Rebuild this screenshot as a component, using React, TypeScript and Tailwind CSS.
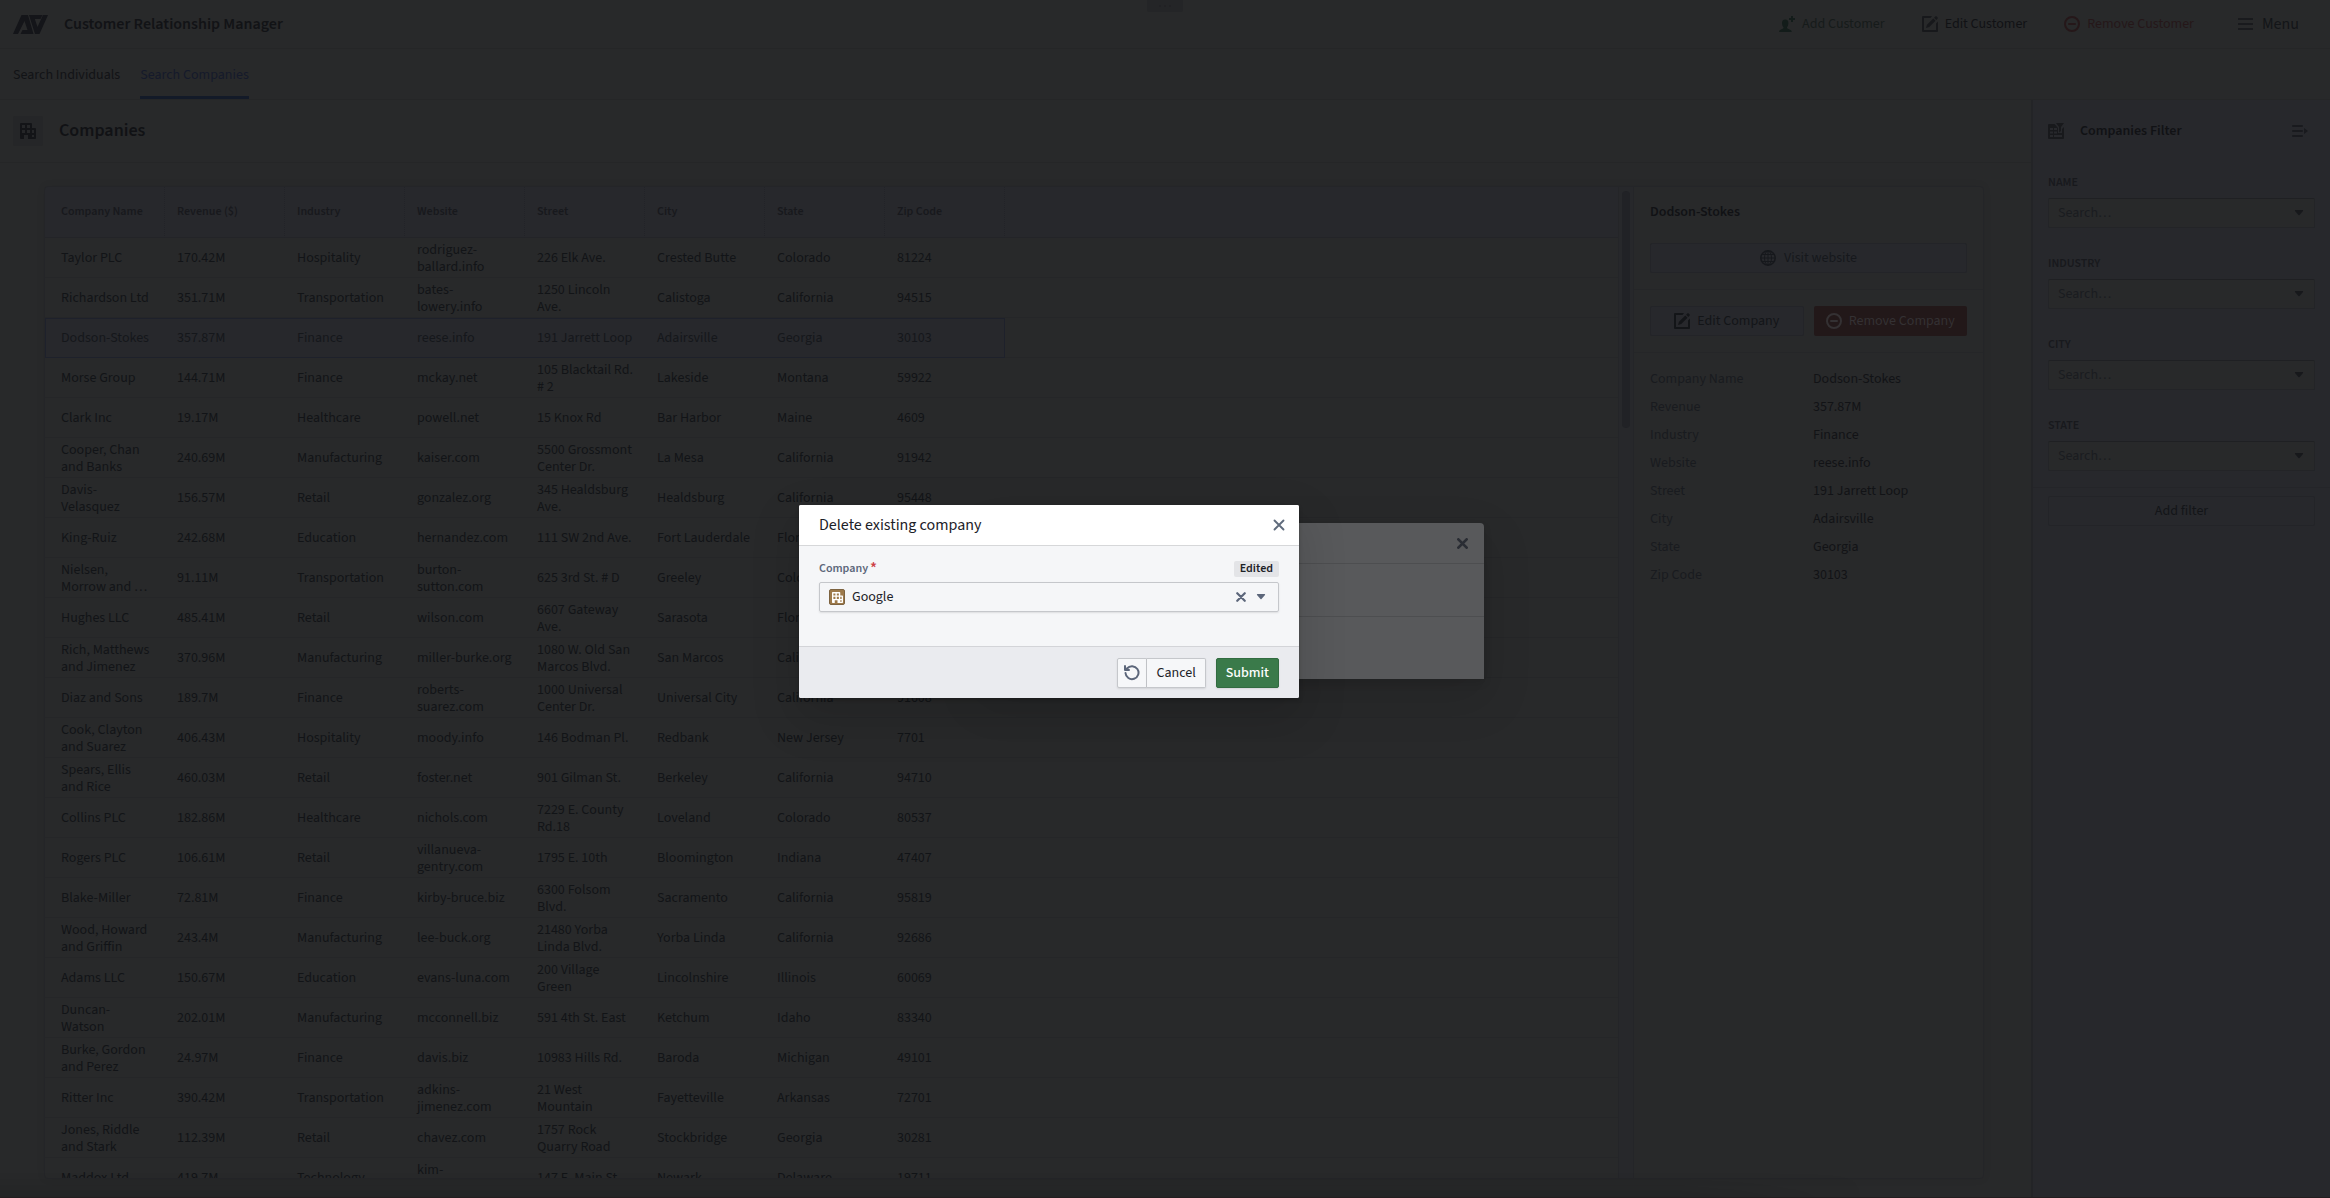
import type { ReactNode } from "react";

type Company = [string, string, string, string, string, string, string, string];

const columns = ["Company Name", "Revenue ($)", "Industry", "Website", "Street", "City", "State", "Zip Code"];

const companies: Company[] = [
  ["Taylor PLC", "170.42M", "Hospitality", "rodriguez-\nballard.info", "226 Elk Ave.", "Crested Butte", "Colorado", "81224"],
  ["Richardson Ltd", "351.71M", "Transportation", "bates-\nlowery.info", "1250 Lincoln\nAve.", "Calistoga", "California", "94515"],
  ["Dodson-Stokes", "357.87M", "Finance", "reese.info", "191 Jarrett Loop", "Adairsville", "Georgia", "30103"],
  ["Morse Group", "144.71M", "Finance", "mckay.net", "105 Blacktail Rd.\n# 2", "Lakeside", "Montana", "59922"],
  ["Clark Inc", "19.17M", "Healthcare", "powell.net", "15 Knox Rd", "Bar Harbor", "Maine", "4609"],
  ["Cooper, Chan\nand Banks", "240.69M", "Manufacturing", "kaiser.com", "5500 Grossmont\nCenter Dr.", "La Mesa", "California", "91942"],
  ["Davis-\nVelasquez", "156.57M", "Retail", "gonzalez.org", "345 Healdsburg\nAve.", "Healdsburg", "California", "95448"],
  ["King-Ruiz", "242.68M", "Education", "hernandez.com", "111 SW 2nd Ave.", "Fort Lauderdale", "Florida", "33301"],
  ["Nielsen,\nMorrow and …", "91.11M", "Transportation", "burton-\nsutton.com", "625 3rd St. # D", "Greeley", "Colorado", "80631"],
  ["Hughes LLC", "485.41M", "Retail", "wilson.com", "6607 Gateway\nAve.", "Sarasota", "Florida", "34231"],
  ["Rich, Matthews\nand Jimenez", "370.96M", "Manufacturing", "miller-burke.org", "1080 W. Old San\nMarcos Blvd.", "San Marcos", "California", "92078"],
  ["Diaz and Sons", "189.7M", "Finance", "roberts-\nsuarez.com", "1000 Universal\nCenter Dr.", "Universal City", "California", "91608"],
  ["Cook, Clayton\nand Suarez", "406.43M", "Hospitality", "moody.info", "146 Bodman Pl.", "Redbank", "New Jersey", "7701"],
  ["Spears, Ellis\nand Rice", "460.03M", "Retail", "foster.net", "901 Gilman St.", "Berkeley", "California", "94710"],
  ["Collins PLC", "182.86M", "Healthcare", "nichols.com", "7229 E. County\nRd.18", "Loveland", "Colorado", "80537"],
  ["Rogers PLC", "106.61M", "Retail", "villanueva-\ngentry.com", "1795 E. 10th", "Bloomington", "Indiana", "47407"],
  ["Blake-Miller", "72.81M", "Finance", "kirby-bruce.biz", "6300 Folsom\nBlvd.", "Sacramento", "California", "95819"],
  ["Wood, Howard\nand Griffin", "243.4M", "Manufacturing", "lee-buck.org", "21480 Yorba\nLinda Blvd.", "Yorba Linda", "California", "92686"],
  ["Adams LLC", "150.67M", "Education", "evans-luna.com", "200 Village\nGreen", "Lincolnshire", "Illinois", "60069"],
  ["Duncan-\nWatson", "202.01M", "Manufacturing", "mcconnell.biz", "591 4th St. East", "Ketchum", "Idaho", "83340"],
  ["Burke, Gordon\nand Perez", "24.97M", "Finance", "davis.biz", "10983 Hills Rd.", "Baroda", "Michigan", "49101"],
  ["Ritter Inc", "390.42M", "Transportation", "adkins-\njimenez.com", "21 West\nMountain", "Fayetteville", "Arkansas", "72701"],
  ["Jones, Riddle\nand Stark", "112.39M", "Retail", "chavez.com", "1757 Rock\nQuarry Road", "Stockbridge", "Georgia", "30281"],
  ["Maddox Ltd", "419.7M", "Technology", "kim-\nrivera.com", "147 E. Main St.", "Newark", "Delaware", "19711"],
];

const details: [string, string][] = [
  ["Company Name", "Dodson-Stokes"],
  ["Revenue", "357.87M"],
  ["Industry", "Finance"],
  ["Website", "reese.info"],
  ["Street", "191 Jarrett Loop"],
  ["City", "Adairsville"],
  ["State", "Georgia"],
  ["Zip Code", "30103"],
];

const selectedCompany = "Dodson-Stokes";

function Icon({ className = "size-4", children }: { className?: string; children: ReactNode }) {
  return (
    <svg viewBox="0 0 16 16" fill="currentColor" aria-hidden="true" className={`shrink-0 ${className}`}>
      {children}
    </svg>
  );
}

const OfficeIcon = ({ className }: { className?: string }) => (
  <Icon className={className}>
    <path
      fillRule="evenodd"
      d="M1 0h10q1 0 1 1v4h3q1 0 1 1v9q0 1-1 1H8v-4H4v4H1q-1 0-1-1V1q0-1 1-1ZM2 2v3h3V2ZM7 2v3h3V2ZM2 7v3h3V7ZM7 7v3h3V7ZM12 7v3h2V7ZM12 12v2h2v-2Z"
    />
  </Icon>
);

const EditIcon = ({ className }: { className?: string }) => (
  <Icon className={className}>
    <path d="M0 1q0-1 1-1h9L8.500 2H2v12h12V7.500L16 5.500V15q0 1-1 1H1q-1 0-1-1Z" />
    <path d="M4 12l1-3.200L11.300 2.500l2.200 2.200L7.200 11ZM12.100 1.700L13.400.4q.6-.6 1.200 0l1 1q.6.6 0 1.200L14.300 3.900Z" />
  </Icon>
);

const RemoveIcon = ({ className }: { className?: string }) => (
  <Icon className={className}>
    <path fillRule="evenodd" d="M8 0a8 8 0 1 1 0 16A8 8 0 0 1 8 0Zm0 2a6 6 0 1 0 0 12A6 6 0 0 0 8 2Z" />
    <rect x="4" y="7" width="8" height="2" rx="1" />
  </Icon>
);

const GlobeIcon = () => (
  <Icon>
    <g fill="none" stroke="currentColor">
      <circle cx="8" cy="8" r="7.200" strokeWidth="1.500" />
      <ellipse cx="8" cy="8" rx="3.500" ry="7" />
      <path d="M8 1v14M1 8h14M2 4.500h12M2 11.500h12" />
    </g>
  </Icon>
);

const AddPersonIcon = () => (
  <Icon>
    <path d="M0 16q0-2 2.500-2.800Q4.600 12.500 4.600 11.500 3.200 10 3 7.500 2.800 3.500 6.200 3.500T9.400 7.500Q9.200 10 7.900 11.500 7.900 12.500 10 13.200 12.800 14 12.800 16Z" />
    <path d="M12 0h2v2h2v2h-2v2h-2V4h-2V2h2Z" />
  </Icon>
);

const MenuIcon = () => (
  <Icon>
    <path d="M0 2h15v2H0ZM0 7h15v2H0ZM0 12h15v2H0Z" />
  </Icon>
);

const CollapseIcon = () => (
  <Icon>
    <path d="M1 2h9q1 0 1 1t-1 1H1Q0 4 0 3t1-1ZM1 7h9q1 0 1 1t-1 1H1Q0 9 0 8t1-1ZM1 12h9q1 0 1 1t-1 1H1q-1 0-1-1t1-1ZM12 5l4 3-4 3Z" />
  </Icon>
);

const FilterTableIcon = () => (
  <Icon>
    <path
      fillRule="evenodd"
      d="M1 1h5.500L10 5v5h4V6l2-2v11q0 1-1 1H1q-1 0-1-1V2q0-1 1-1ZM2 5v2h3V5ZM6 5v2h3V5ZM2 8.500v2h3v-2ZM6 8.500v2h3v-2ZM2 12v2h3v-2ZM6 12v2h8v-2Z"
    />
    <path d="M8 0h8l-3 4v4l-2 1.500V4Z" />
  </Icon>
);

const CrossIcon = ({ className = "size-3", width = 2 }: { className?: string; width?: number }) => (
  <Icon className={className}>
    <path d="M2 2l12 12M14 2L2 14" stroke="currentColor" strokeWidth={width} strokeLinecap="round" />
  </Icon>
);

const CaretIcon = ({ className = "size-4" }: { className?: string }) => (
  <Icon className={className}>
    <path d="M4.500 5h7q1 0 .5.900L8.500 10q-.5.500-1 0L4 5.900Q3.500 5 4.500 5Z" />
  </Icon>
);

const ResetIcon = () => (
  <Icon>
    <path d="M3 3.500A6.500 6.500 0 1 1 1.500 8" fill="none" stroke="currentColor" strokeWidth="2" strokeLinecap="round" />
    <path d="M1 0q.9 0 1 1v3h3q1 .1 1 1t-1 1H1Q0 6 0 5V1q.1-1 1-1Z" />
  </Icon>
);

function TopBar() {
  return (
    <header className="flex h-[49px] shrink-0 items-center border-b border-[#252627] pl-[13px] pr-[31px]">
      <svg viewBox="0 0 35 19" fill="#141519" className="h-[19px] w-[35px]" aria-label="Logo">
        <path d="M0 19L8.500 0H15L20.500 19H7.500L9.500 15H14.500L11.500 6L5 19Z" />
        <path d="M16 0H29.500L27.500 4H21.800L24.500 12L30 0H35L26.500 19H22Z" />
      </svg>
      <h1 className="ml-4 text-base leading-5 font-semibold text-[#121316]">Customer Relationship Manager</h1>
      <div className="ml-auto flex items-center">
        <button className="flex items-center gap-[7px] text-[#161b1a]">
          <span className="text-[#131c1a]">
            <AddPersonIcon />
          </span>
          Add Customer
        </button>
        <button className="ml-[37px] flex items-center gap-[7px] text-[#111215]">
          <span className="text-[#17181b]">
            <EditIcon />
          </span>
          Edit Customer
        </button>
        <button className="ml-[37px] flex items-center gap-[7px] text-[#251719]">
          <RemoveIcon />
          Remove Customer
        </button>
        <button className="ml-11 flex items-center gap-2 text-base leading-5 text-[#131518]">
          <span className="text-[#191a1d]">
            <MenuIcon />
          </span>
          Menu
        </button>
      </div>
    </header>
  );
}

function Tabs() {
  return (
    <nav className="flex h-[51px] shrink-0 gap-5 border-b border-[#252627] pl-[13px]">
      <a href="#individuals" className="flex items-center border-b-3 border-transparent pt-1 text-[#121316]">
        Search Individuals
      </a>
      <a href="#companies" className="flex items-center border-b-3 border-[#131a28] pt-1 text-[#151a2b]">
        Search Companies
      </a>
    </nav>
  );
}

function CompaniesTable() {
  return (
    <div className="min-w-0 flex-1 overflow-hidden">
      <table className="w-full table-fixed border-separate border-spacing-0 text-left">
        <thead>
          <tr className="h-[51px] bg-[#27282c]">
            {columns.map((name) => (
              <th
                key={name}
                className="w-[120px] border-r border-b border-r-[#222328] border-b-[#232428] pl-3 text-xs font-semibold text-[#18191d] [border-right-style:dotted] first:pl-4"
              >
                {name}
              </th>
            ))}
            <th className="border-b border-[#232428]" />
          </tr>
        </thead>
        <tbody>
          {companies.map((row) => {
            const selected = row[0] === selectedCompany;
            return (
              <tr key={row[0]} className="h-10 text-[#121417]">
                {row.map((value, i) => (
                  <td
                    key={columns[i]}
                    className={
                      selected
                        ? "border-y border-[#1e212b] bg-[#27282c] p-0 pt-px pl-3 leading-[17px] whitespace-pre text-[#15171b] first:border-l first:pl-[15px] nth-[8]:border-r"
                        : "border-b border-[#252628] p-0 pt-[2px] pl-3 leading-[17px] whitespace-pre first:pl-4"
                    }
                  >
                    {value}
                  </td>
                ))}
                <td className="border-b border-[#252628] p-0" />
              </tr>
            );
          })}
        </tbody>
      </table>
    </div>
  );
}

function CompanyDetails() {
  return (
    <section className="w-[350px] shrink-0 border-l border-[#242528]">
      <div className="flex flex-col gap-[22px] border-b border-[#252628] px-4 pt-4 pb-4">
        <h3 className="leading-[18px] font-semibold text-[#111215]">Dodson-Stokes</h3>
        <button className="flex h-[30px] items-center justify-center gap-2 rounded-xs border border-[#232428] bg-[#27282c] text-[#16181c]">
          <GlobeIcon />
          Visit website
        </button>
      </div>
      <div className="grid grid-cols-2 gap-[10px] border-b border-[#252628] p-4">
        <button className="flex h-[30px] items-center justify-center gap-[7px] rounded-xs border border-[#232428] bg-[#27282c] text-[#131518]">
          <EditIcon />
          Edit Company
        </button>
        <button className="flex h-[30px] items-center justify-center gap-[7px] rounded-xs bg-[#221819] text-[#343133]">
          <RemoveIcon />
          Remove Company
        </button>
      </div>
      <dl className="grid grid-cols-[163px_1fr] gap-y-2 px-4 pt-4 leading-5">
        {details.map(([label, value]) => (
          <div key={label} className="contents">
            <dt className="text-[#191b1f]">{label}</dt>
            <dd className="text-[#121316]">{value}</dd>
          </div>
        ))}
      </dl>
    </section>
  );
}

function FilterField({ label }: { label: string }) {
  return (
    <label className="flex flex-col">
      <span className="mb-[6px] text-xs leading-[18px] font-semibold text-[#18191d] uppercase">{label}</span>
      <span className="flex h-[30px] items-center rounded-xs border border-[#232427] border-t-[#1f2023] bg-[#28292a] pr-[7px] pl-[9px]">
        <input
          type="text"
          placeholder="Search…"
          className="min-w-0 flex-1 bg-transparent text-[#15171a] outline-none placeholder:text-[#1a1c20]"
        />
        <span className="text-[#17181b]">
          <CaretIcon />
        </span>
      </span>
    </label>
  );
}

function FilterPanel() {
  return (
    <aside className="flex w-[299px] shrink-0 flex-col border-l-2 border-[#232427] bg-[#27282c]">
      <div className="flex h-[74px] items-center px-[15px] pb-3">
        <span className="text-[#18191c]">
          <FilterTableIcon />
        </span>
        <h2 className="ml-4 leading-5 font-semibold text-[#111215]">Companies Filter</h2>
        <button className="mr-[7px] ml-auto text-[#191a1e]" aria-label="Collapse filters">
          <CollapseIcon />
        </button>
      </div>
      <div className="flex flex-col gap-[27px] border-b border-[#242529] px-[15px] pb-4">
        {["Name", "Industry", "City", "State"].map((name) => (
          <FilterField key={name} label={name} />
        ))}
      </div>
      <div className="flex flex-col px-[15px] pt-2">
        <button className="h-[30px] rounded-xs border border-[#232428] text-[#131518]">Add filter</button>
      </div>
    </aside>
  );
}

function BackgroundDialog() {
  return (
    <div className="absolute top-[523px] left-[984px] w-[500px] rounded-t bg-[#58595b] shadow-[0_4px_8px_#0000001a,0_18px_46px_6px_#0000001a]">
      <div className="flex h-[41px] items-center justify-end border-b border-[#4d4e50] pr-4 text-[#2a2d34]">
        <button aria-label="Close" className="flex">
          <CrossIcon className="size-[11px]" width={4} />
        </button>
      </div>
      <div className="h-[53px] border-b border-[#4d4e50]" />
      <div className="h-[62px]" />
    </div>
  );
}

function DeleteCompanyDialog() {
  return (
    <form
      role="dialog"
      aria-label="Delete existing company"
      className="absolute top-[505px] left-[799px] flex w-[500px] flex-col rounded-xs bg-[#f5f6f8] text-[#1c2127] shadow-[0_2px_4px_#00000033,0_18px_46px_6px_#0000001f]"
    >
      <div className="flex h-[41px] items-center justify-between rounded-t-xs border-b border-[#d6d7d9] bg-white pr-[14px] pl-5">
        <h2 className="text-base leading-5">Delete existing company</h2>
        <button type="button" aria-label="Close" className="flex text-[#5f6b7c]">
          <CrossIcon className="size-3" width={2.5} />
        </button>
      </div>
      <div className="px-5 pt-[15px] pb-[34px]">
        <div className="mb-[5px] flex h-4 items-center justify-between">
          <label htmlFor="company" className="flex gap-[2px] text-xs leading-4 font-semibold text-[#5c667a]">
            Company
            <span className="text-base leading-[14px] text-[#cd4246]">*</span>
          </label>
          <span className="rounded-xs bg-[#e3e4e7] px-[6px] text-xs leading-4 font-semibold">Edited</span>
        </div>
        <div className="flex h-[30px] items-center rounded-xs border border-[#c5c7cb] pr-[9px] pl-[9px] shadow-[0_1px_2px_#0000001a]">
          <span className="flex size-4 items-center justify-center rounded-xs border border-[#7d6340] bg-[#9d7a4b] text-white">
            <OfficeIcon className="size-[11px]" />
          </span>
          <input id="company" type="text" defaultValue="Google" className="ml-[7px] min-w-0 flex-1 bg-transparent outline-none" />
          <button type="button" aria-label="Clear" className="flex text-[#5c667a]">
            <CrossIcon className="size-[10px]" width={3.5} />
          </button>
          <span className="ml-[7px] text-[#5c667a]">
            <CaretIcon />
          </span>
        </div>
      </div>
      <div className="flex h-[52px] items-center justify-end rounded-b-xs border-t border-[#d3d4d8] bg-[#eaebef] px-5">
        <button
          type="button"
          aria-label="Reset"
          className="flex h-[30px] w-[30px] items-center justify-center rounded-l-xs border border-[#c5c7cb] bg-[#f6f7f9] text-[#5c667a] shadow-[0_1px_2px_#0000001a]"
        >
          <ResetIcon />
        </button>
        <button
          type="button"
          className="h-[30px] rounded-r-xs border border-l-0 border-[#c5c7cb] bg-[#f6f7f9] px-[9px] shadow-[0_1px_2px_#0000001a]"
        >
          Cancel
        </button>
        <button
          type="submit"
          className="ml-[10px] h-[30px] rounded-xs border border-[#316b40] bg-[#3a7a4a] px-[9px] font-medium text-white shadow-[0_1px_2px_#0000001a]"
        >
          Submit
        </button>
      </div>
    </form>
  );
}

export default function App() {
  return (
    <div className="relative flex h-screen flex-col overflow-hidden border-b border-[#231d1f] bg-[#28292a] font-['Source_Sans_3','Noto_Sans_CJK_SC',sans-serif] text-sm leading-[18px]">
      <TopBar />
      <Tabs />
      <div className="flex min-h-0 flex-1">
        <main className="flex min-w-0 flex-1 flex-col">
          <div className="flex h-[63px] shrink-0 items-center gap-4 border-b border-[#252627] pl-[13px]">
            <span className="flex size-[30px] items-center justify-center rounded-xs bg-[#252628] text-[#131417]">
              <OfficeIcon />
            </span>
            <h2 className="text-lg leading-6 font-semibold text-[#111215]">Companies</h2>
          </div>
          <div className="flex min-h-0 flex-1 flex-col pt-[23px] pr-[47px] pb-[18px] pl-11">
            <div className="flex min-h-0 flex-1 overflow-hidden rounded border border-[#242528] shadow-[0_0_8px_#00000010]">
              <CompaniesTable />
              <div className="flex w-[15px] shrink-0 justify-center border-l border-[#242528] bg-[#27282b] pt-1">
                <div className="h-[237px] w-2 rounded-full bg-[#212226]" />
              </div>
              <CompanyDetails />
            </div>
          </div>
        </main>
        <FilterPanel />
      </div>
      <div className="absolute top-0 left-1/2 flex h-3 w-9 -translate-x-1/2 items-center justify-center gap-[3px] rounded-b-xs bg-[#242527]">
        <span className="size-[2px] rounded-full bg-[#202124]" />
        <span className="size-[2px] rounded-full bg-[#202124]" />
        <span className="size-[2px] rounded-full bg-[#202124]" />
      </div>
      <div className="pointer-events-none absolute bottom-0 left-0 h-6 w-4/5 bg-linear-to-t from-black/10 to-transparent mask-r-from-90%" />
      <BackgroundDialog />
      <DeleteCompanyDialog />
    </div>
  );
}
